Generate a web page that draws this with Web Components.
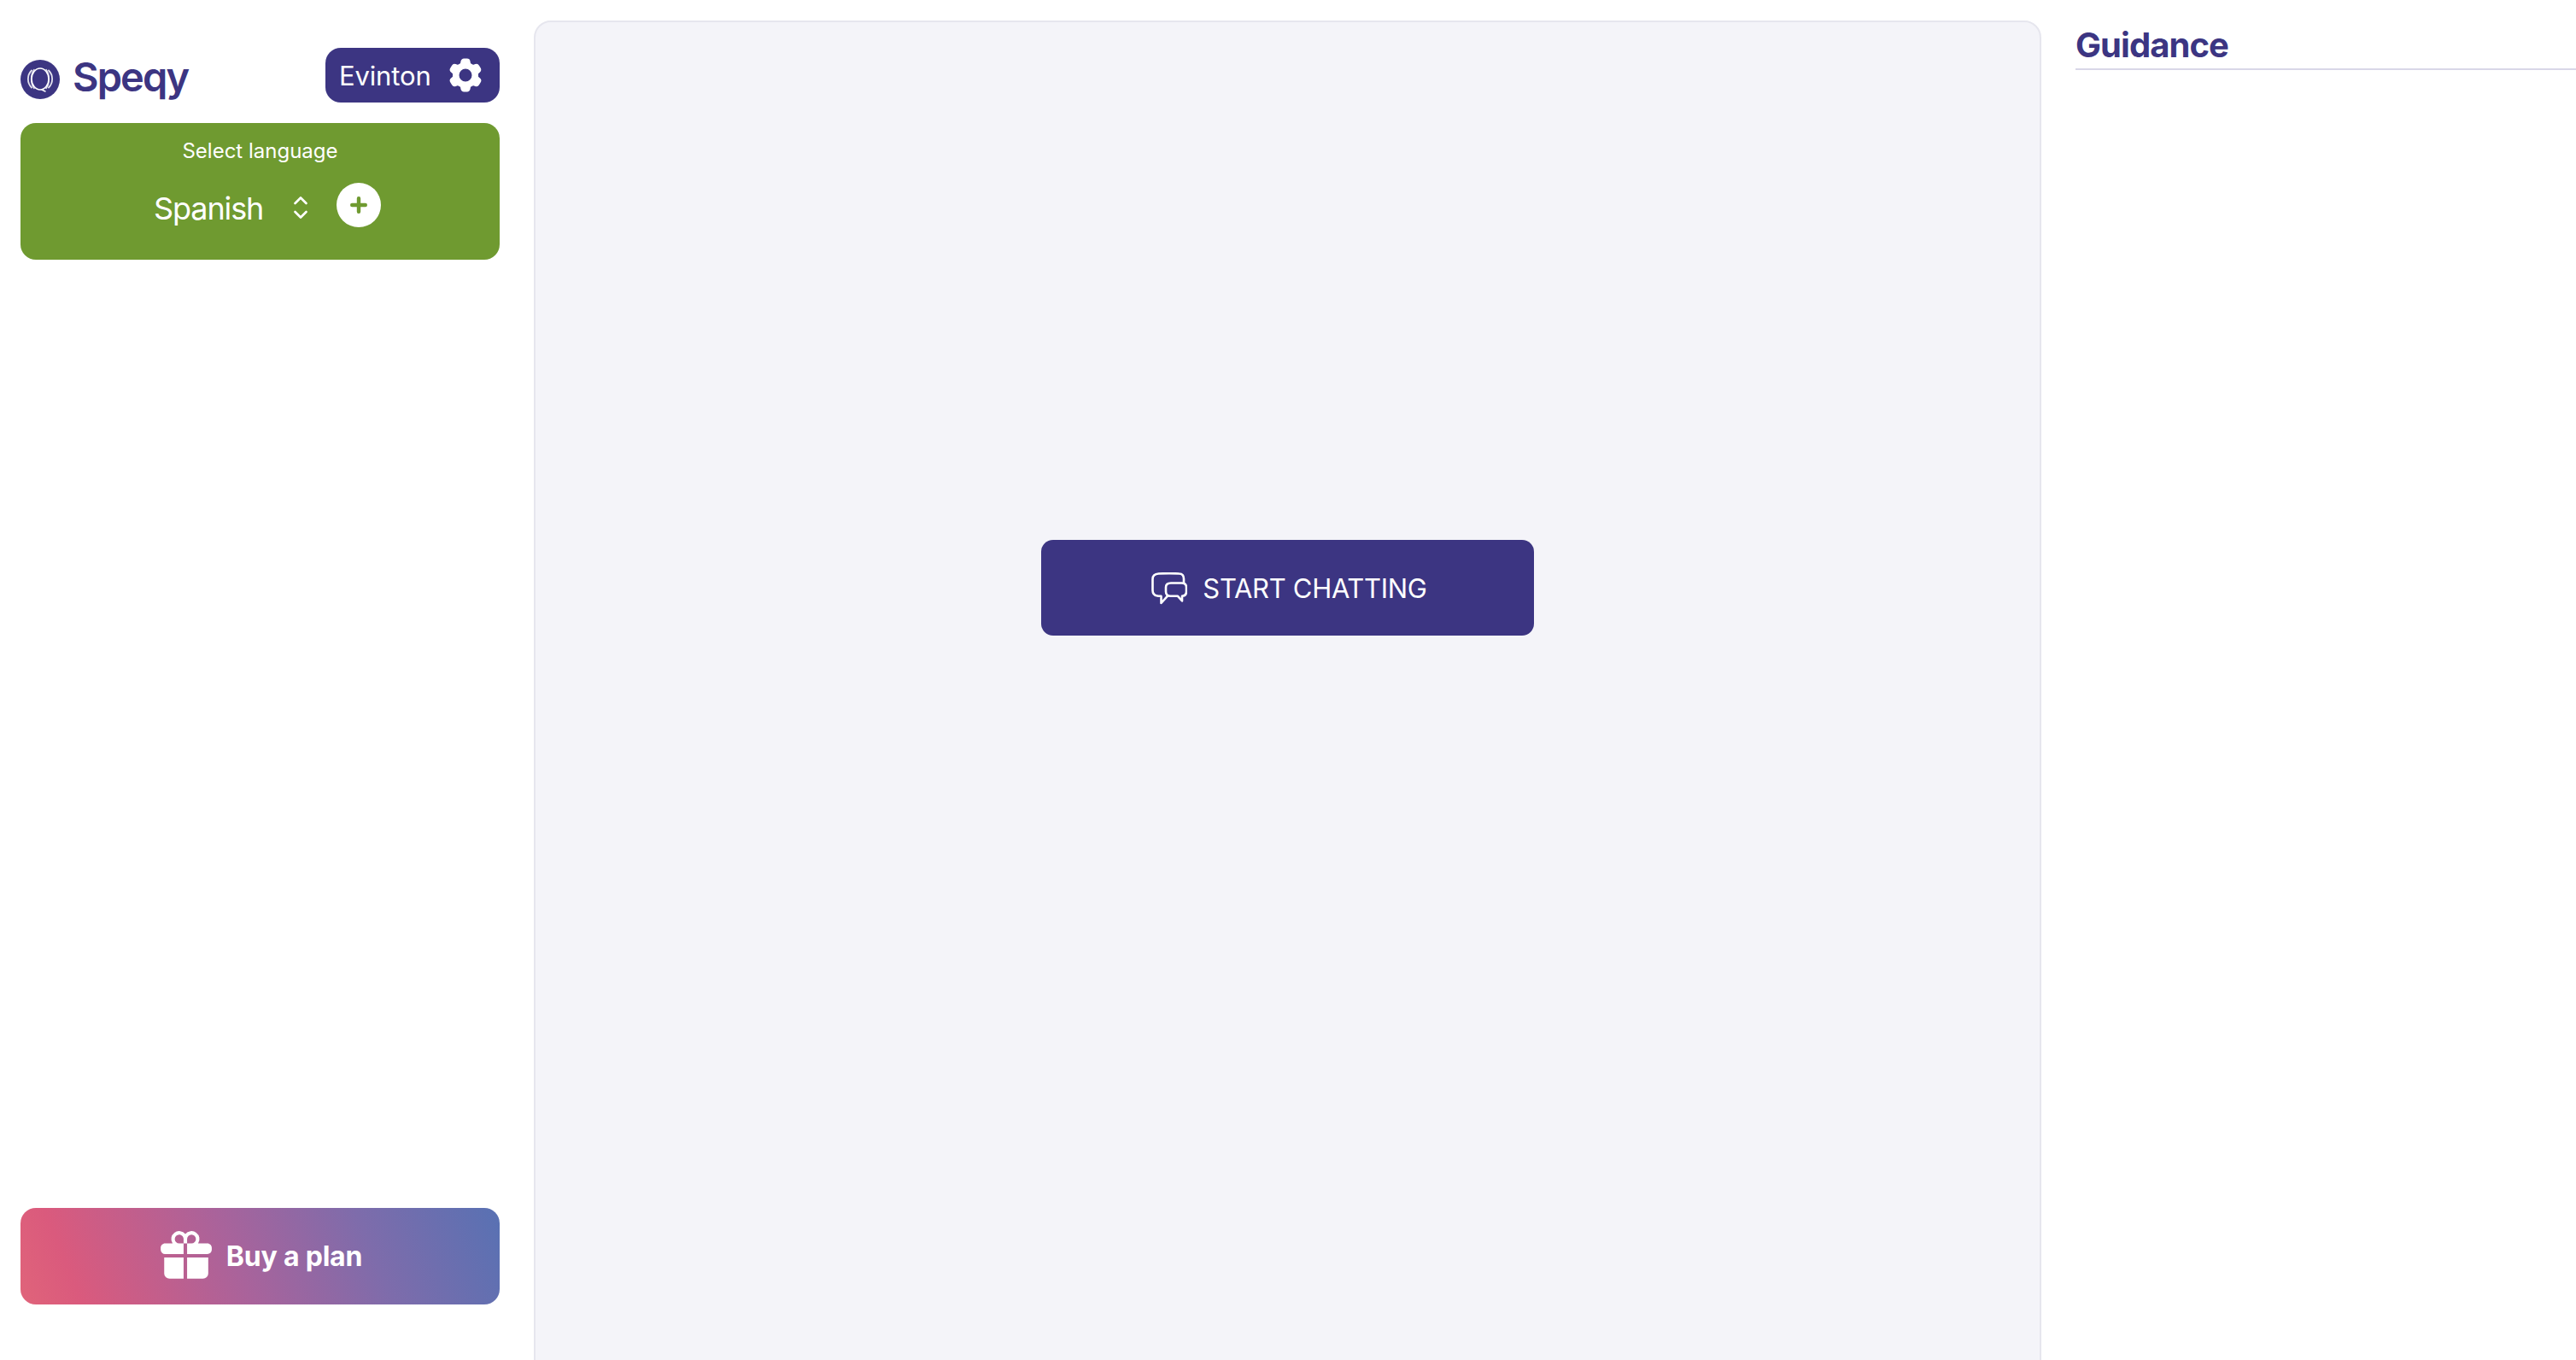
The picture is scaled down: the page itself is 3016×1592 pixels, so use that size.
<!DOCTYPE html>
<html lang="en">
<head>
<meta charset="utf-8">
<title>Speqy</title>
<style>
  html, body { margin: 0; height: 100%; background: #fff; overflow: hidden; }
  body { font-family: Inter, "Liberation Sans", sans-serif; }
</style>
</head>
<body>
<speqy-app>
  <speqy-sidebar slot="sidebar">
    <speqy-brand slot="header">Speqy</speqy-brand>
    <user-button slot="header">Evinton</user-button>
    <language-card slot="top" label="Select language">Spanish</language-card>
    <buy-plan slot="bottom">Buy a plan</buy-plan>
  </speqy-sidebar>
  <chat-panel slot="main">START CHATTING</chat-panel>
  <guidance-panel slot="aside">Guidance</guidance-panel>
</speqy-app>

<script>
  class SpeqyApp extends HTMLElement {
    constructor() {
      super();
      this.attachShadow({ mode: 'open' });
      this.shadowRoot.innerHTML = `
        <style>
          :host {
            display: grid;
            grid-template-columns: 561px 1765px 586px;
            column-gap: 40px;
            width: 3016px;
            height: 1592px;
            padding-left: 24px;
            box-sizing: border-box;
            overflow: hidden;
          }
        </style>
        <slot name="sidebar"></slot>
        <slot name="main"></slot>
        <slot name="aside"></slot>
      `;
    }
  }

  class SpeqySidebar extends HTMLElement {
    constructor() {
      super();
      this.attachShadow({ mode: 'open' });
      this.shadowRoot.innerHTML = `
        <style>
          :host {
            display: flex;
            flex-direction: column;
            height: 1592px;
            padding: 56px 0 65px;
            box-sizing: border-box;
          }
          .header {
            display: flex;
            justify-content: space-between;
            align-items: flex-start;
            margin-bottom: 24px;
          }
          .spacer { flex: 1; }
        </style>
        <div class="header"><slot name="header"></slot></div>
        <slot name="top"></slot>
        <div class="spacer"></div>
        <slot name="bottom"></slot>
      `;
    }
  }

  class SpeqyBrand extends HTMLElement {
    constructor() {
      super();
      this.attachShadow({ mode: 'open' });
      this.shadowRoot.innerHTML = `
        <style>
          :host {
            display: flex;
            align-items: center;
            gap: 15px;
            height: 64px;
            padding-top: 3px;
            box-sizing: border-box;
            color: #3c3582;
            font-size: 47px;
            font-weight: 600;
            letter-spacing: -1.9px;
          }
          svg { width: 46px; height: 46px; flex: none; margin-top: 6px; }
        </style>
        <svg viewBox="0 0 46 46" fill="none" stroke="#fff" stroke-linecap="round">
          <circle cx="23" cy="23" r="23" fill="#3c3582" stroke="none"/>
          <ellipse cx="23" cy="22.500" rx="10" ry="12.500" stroke-width="1.500"/>
          <path d="M13 12.500c-5.500 5.500-5.500 14.500 0 20" stroke-width="1.800" opacity=".85"/>
          <path d="M16 11.500c-4.500 6-4.500 16 0 22" stroke-width="1.500" opacity=".85"/>
          <path d="M33 12.500c5.500 5.500 5.500 14.500 0 20" stroke-width="1.800" opacity=".85"/>
          <path d="M30 11.500c4.500 6 4.500 16 0 22" stroke-width="1.500" opacity=".85"/>
          <path d="M25 35l4 2" stroke-width="1.500"/>
        </svg>
        <slot></slot>
      `;
    }
  }

  class UserButton extends HTMLElement {
    constructor() {
      super();
      this.attachShadow({ mode: 'open' });
      this.shadowRoot.innerHTML = `
        <style>
          :host {
            display: flex;
            align-items: center;
            width: 204px;
            height: 64px;
            padding-left: 16px;
            box-sizing: border-box;
            background: #3c3582;
            border-radius: 18px;
            color: #fff;
            font-size: 31px;
            letter-spacing: -0.15px;
          }
          svg { width: 48px; height: 48px; margin-left: 16px; flex: none; margin-top: -1px; }
        </style>
        <slot></slot>
        <svg viewBox="0 0 24 24" fill="#fff"><path fill-rule="evenodd" clip-rule="evenodd" d="M11.078 2.25c-.917 0-1.699.663-1.85 1.567L9.05 4.889c-.02.12-.115.26-.297.348a7.493 7.493 0 00-.986.57c-.166.115-.334.126-.45.083L6.3 5.508a1.875 1.875 0 00-2.282.819l-.922 1.597a1.875 1.875 0 00.432 2.385l.84.692c.095.078.17.229.154.43a7.598 7.598 0 000 1.139c.015.2-.059.352-.153.43l-.841.692a1.875 1.875 0 00-.432 2.385l.922 1.597a1.875 1.875 0 002.282.818l1.019-.382c.115-.043.283-.031.45.082.312.214.641.405.985.57.182.088.277.228.297.35l.178 1.071c.151.904.933 1.567 1.85 1.567h1.844c.916 0 1.699-.663 1.85-1.567l.178-1.072c.02-.12.114-.26.297-.349.344-.165.673-.356.985-.57.167-.114.335-.125.45-.082l1.02.382a1.875 1.875 0 002.28-.819l.923-1.597a1.875 1.875 0 00-.432-2.385l-.84-.692c-.095-.078-.17-.229-.154-.43a7.614 7.614 0 000-1.139c-.016-.2.059-.352.153-.43l.84-.692c.708-.582.891-1.59.433-2.385l-.922-1.597a1.875 1.875 0 00-2.282-.818l-1.02.382c-.114.043-.282.031-.449-.083a7.49 7.49 0 00-.985-.57c-.183-.087-.277-.227-.297-.348l-.179-1.072a1.875 1.875 0 00-1.85-1.567h-1.843zM12 15.75a3.75 3.75 0 100-7.5 3.75 3.75 0 000 7.5z"/></svg>
      `;
    }
  }

  class LanguageCard extends HTMLElement {
    constructor() {
      super();
      this.attachShadow({ mode: 'open' });
      this.shadowRoot.innerHTML = `
        <style>
          :host {
            display: block;
            height: 160px;
            padding-top: 18px;
            box-sizing: border-box;
            background: #6f9a30;
            border-radius: 18px;
            color: #fff;
            text-align: center;
          }
          .label { font-size: 24px; line-height: 30px; }
          .row {
            display: flex;
            align-items: center;
            margin-top: 22px;
            padding-left: 156px;
            height: 52px;
          }
          .name { font-size: 36px; line-height: 52px; letter-spacing: -1.1px; position: relative; top: 4px; }
          .updown { width: 16px; height: 26px; margin-left: 36px; flex: none; position: relative; top: 3px; }
          .add {
            width: 52px;
            height: 52px;
            margin-left: 34px;
            flex: none;
            background: #fff;
            border-radius: 50%;
            display: flex;
            align-items: center;
            justify-content: center;
          }
          .add svg { width: 20px; height: 20px; }
        </style>
        <div class="label"></div>
        <div class="row">
          <span class="name"><slot></slot></span>
          <svg class="updown" viewBox="0 0 16 26" fill="none" stroke="#fff" stroke-width="2.600" stroke-linecap="round" stroke-linejoin="round">
            <path d="M1.500 8l6.500-6.500L14.500 8"/>
            <path d="M1.500 18l6.500 6.500L14.500 18"/>
          </svg>
          <span class="add">
            <svg viewBox="0 0 20 20" fill="none" stroke="#6f9a30" stroke-width="4.400" stroke-linecap="round">
              <path d="M10 2.200v15.600M2.200 10h15.600"/>
            </svg>
          </span>
        </div>
      `;
    }

    connectedCallback() {
      this.shadowRoot.querySelector('.label').textContent = this.getAttribute('label');
    }
  }

  class BuyPlan extends HTMLElement {
    constructor() {
      super();
      this.attachShadow({ mode: 'open' });
      this.shadowRoot.innerHTML = `
        <style>
          :host {
            display: flex;
            align-items: center;
            justify-content: center;
            gap: 15px;
            height: 113px;
            background: linear-gradient(68deg, #e0647a 0%, #da5a7d 12%, #a9639b 45%, #7e6cab 72%, #5871b3 100%);
            border-radius: 18px;
            color: #fff;
            font-size: 32px;
            font-weight: 700;
            letter-spacing: -0.2px;
          }
          svg { width: 66px; height: 66px; flex: none; margin-top: -2px; margin-left: -1px; }
        </style>
        <svg viewBox="0 0 24 24" fill="#fff"><path d="M9.375 3a1.875 1.875 0 000 3.750h1.875v4.500H3.375A1.875 1.875 0 011.500 9.375v-.75c0-1.036.84-1.875 1.875-1.875h3.193A3.375 3.375 0 0112 2.753a3.375 3.375 0 015.432 3.997h3.943c1.035 0 1.875.84 1.875 1.875v.75c0 1.036-.84 1.875-1.875 1.875H12.750v-4.500h1.875a1.875 1.875 0 10-1.875-1.875V6.750h-1.500V4.875C11.250 3.839 10.410 3 9.375 3zM11.250 12.750H3v6.750a2.250 2.250 0 002.250 2.250h6v-9zM12.750 12.750v9h6.750a2.250 2.250 0 002.250-2.250v-6.750h-9z"/></svg>
        <slot></slot>
      `;
    }
  }

  class ChatPanel extends HTMLElement {
    constructor() {
      super();
      this.attachShadow({ mode: 'open' });
      this.shadowRoot.innerHTML = `
        <style>
          :host {
            display: flex;
            justify-content: center;
            height: 1640px;
            margin-top: 24px;
            padding-top: 606px;
            box-sizing: border-box;
            background: #f4f4f9;
            border: 2px solid #e6e6ee;
            border-radius: 20px;
          }
          .start {
            display: flex;
            align-items: center;
            justify-content: center;
            gap: 18px;
            width: 577px;
            height: 112px;
            padding-left: 4px;
            box-sizing: border-box;
            background: #3c3582;
            border-radius: 14px;
            color: #fff;
            font-size: 31px;
            letter-spacing: -0.3px;
          }
          svg { width: 42px; height: 38px; flex: none; margin-top: 1px; }
        </style>
        <div class="start">
          <svg viewBox="0 0 42 38" fill="none" stroke="#fff" stroke-width="2.600" stroke-linecap="round" stroke-linejoin="round">
            <path d="M38 12V7.500C38 4 36 1.600 32.500 1.500c-7-.4-16-.4-24 0C4 1.700 1.500 4 1.500 8v13c0 3.600 2 6 5.500 6.500 1.500.2 3.500.3 4.500.4V36l7.500-8.300"/>
            <path d="M23 12.500h12.500c3.500 0 5.500 2 5.500 5v5c0 3-2 5-5 5.200v5.800l-5-5.700h-8.500c-4 0-5.500-2.300-5.500-5.300v-5c0-3 2-5 6-5z"/>
          </svg>
          <slot></slot>
        </div>
      `;
    }
  }

  class GuidancePanel extends HTMLElement {
    constructor() {
      super();
      this.attachShadow({ mode: 'open' });
      this.shadowRoot.innerHTML = `
        <style>
          :host { display: block; padding-top: 30px; color: #3c3582; }
          h2 {
            margin: 0;
            height: 50px;
            font-size: 40px;
            font-weight: 700;
            line-height: 46px;
            letter-spacing: -0.95px;
            border-bottom: 2px solid #d9d7e8;
          }
        </style>
        <h2><slot></slot></h2>
      `;
    }
  }

  customElements.define('speqy-app', SpeqyApp);
  customElements.define('speqy-sidebar', SpeqySidebar);
  customElements.define('speqy-brand', SpeqyBrand);
  customElements.define('user-button', UserButton);
  customElements.define('language-card', LanguageCard);
  customElements.define('buy-plan', BuyPlan);
  customElements.define('chat-panel', ChatPanel);
  customElements.define('guidance-panel', GuidancePanel);
</script>
</body>
</html>
